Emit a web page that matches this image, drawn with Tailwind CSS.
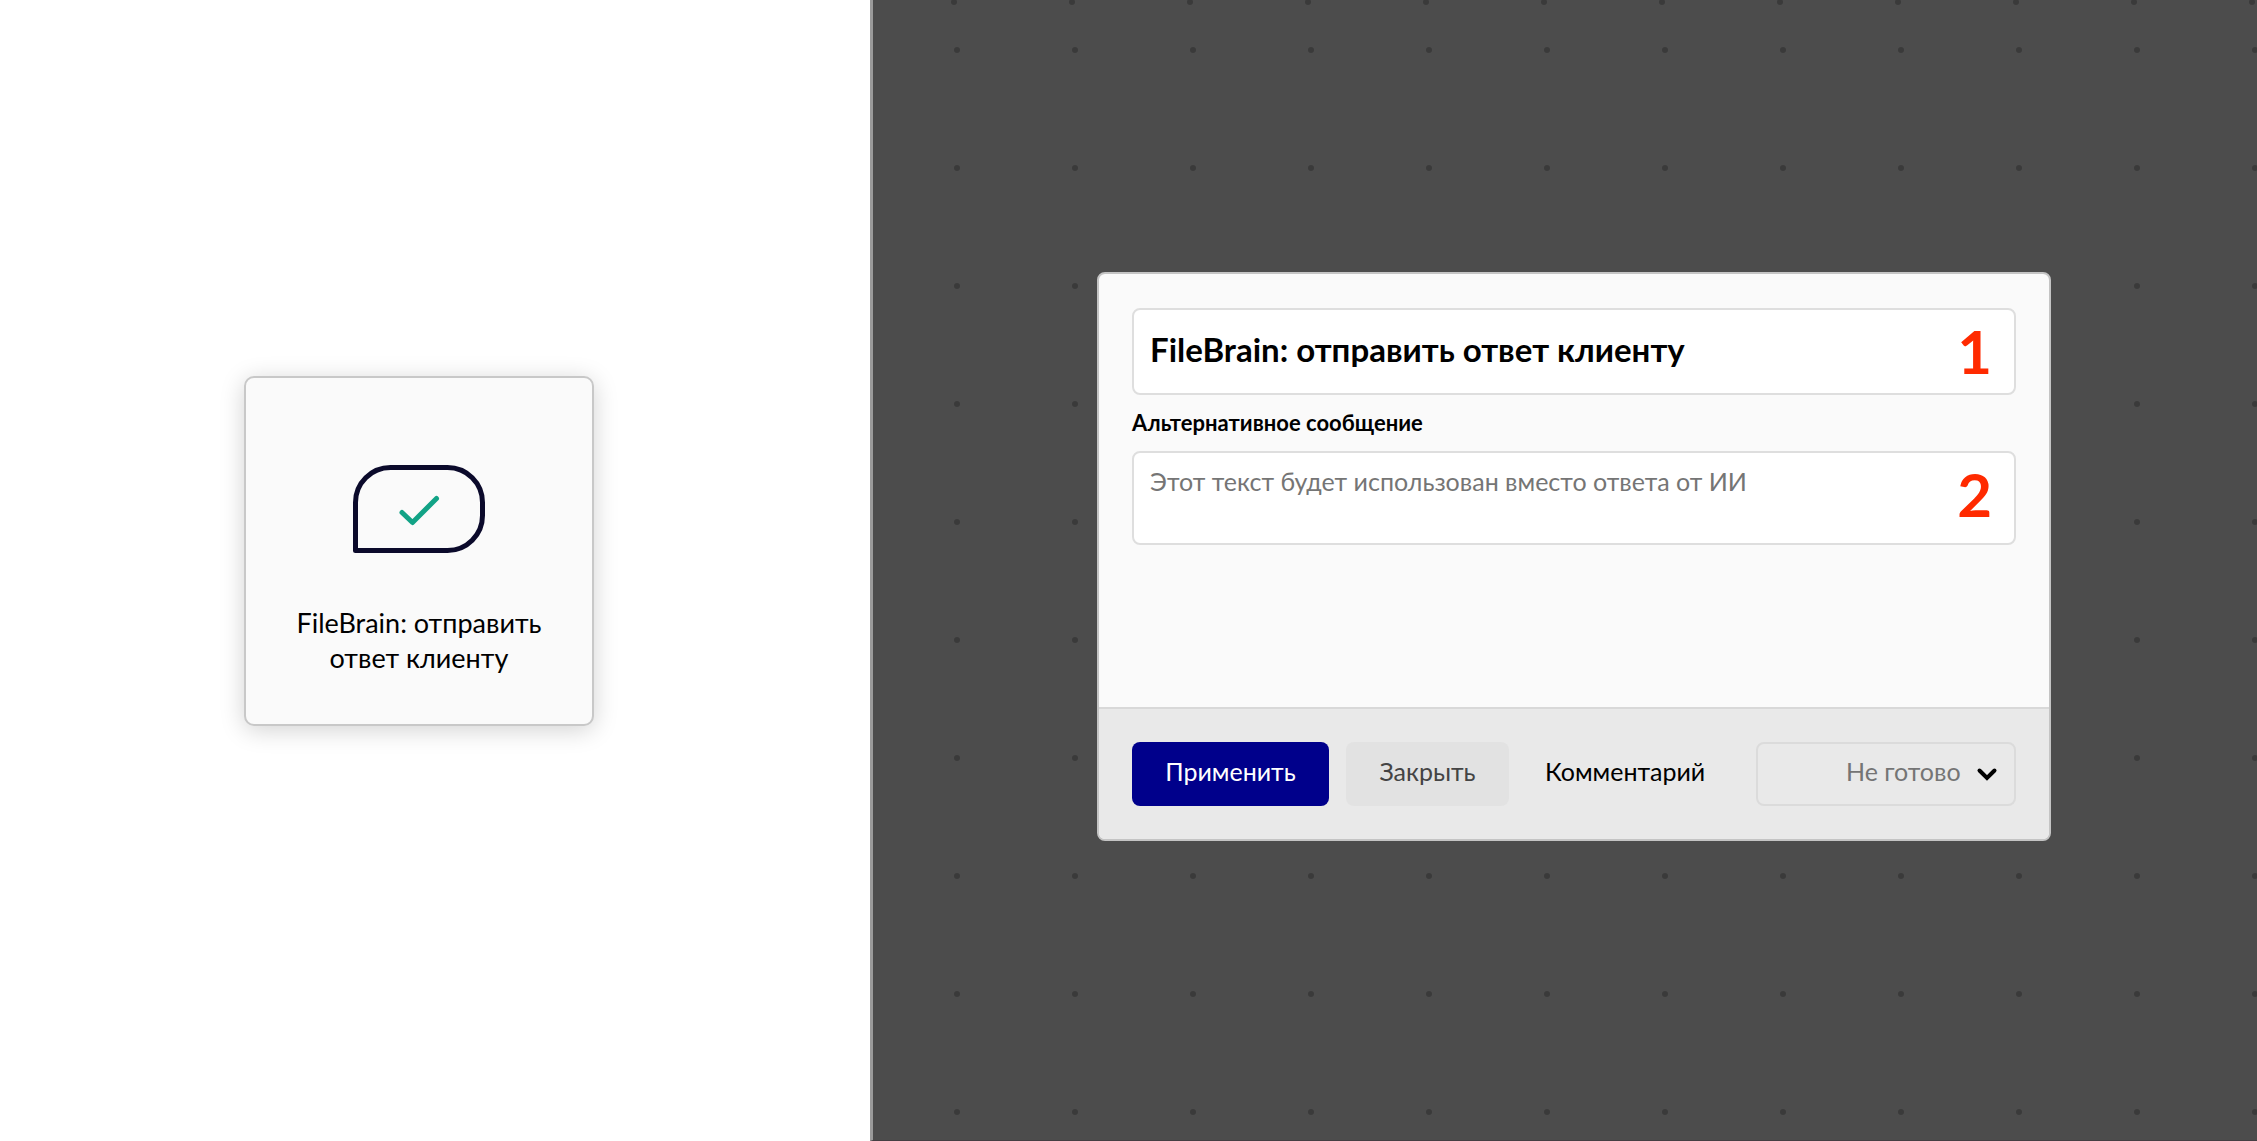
<!DOCTYPE html>
<html lang="ru">
<head>
  <meta charset="UTF-8" />
  <meta name="viewport" content="width=device-width, initial-scale=1.0"/>
  <title>FileBrain: отправить ответ клиенту</title>
  <script src="https://cdn.jsdelivr.net/npm/@tailwindcss/browser@4"></script>
</head>
<body class="min-h-screen flex bg-white text-black font-['Lato','Open_Sans',sans-serif]">

  <!-- Карточка блока -->
  <aside class="w-[870px] max-w-[40%] flex items-center justify-center pr-8 pb-10">
    <div class="w-[350px] h-[350px] flex flex-col items-center rounded-[10px] border-2 border-[#c8c8c8] bg-[#fafafa] pt-[87px] shadow-[0_4px_24px_rgba(0,0,0,0.18)]">
      <svg class="w-[132px] h-[88px]" viewBox="0 0 132 88" fill="none" stroke-linecap="round" stroke-linejoin="round">
        <path d="M2.5 85.5V37.5A35 35 0 0 1 37.500 2.500H94.500A35 35 0 0 1 129.500 37.500V50.500A35 35 0 0 1 94.500 85.500Z" stroke="#0b0a2b" stroke-width="5"/>
        <path d="M49 47.500L59.500 57.500L83.500 33.500" stroke="#12a386" stroke-width="5"/>
      </svg>
      <p class="mt-[52px] px-10 text-center text-[27px] leading-[35px]">FileBrain: отправить ответ клиенту</p>
    </div>
  </aside>

  <!-- Рабочее поле -->
  <main class="relative flex-1 flex items-center justify-center border-l-3 border-b border-l-[#9a9a9a] border-b-[#443f43] bg-[#4c4c4c] pl-[18px] pb-7">
    <svg class="absolute inset-0 w-full h-full" aria-hidden="true">
      <defs>
        <pattern id="dots" x="25" y="-9" width="118" height="118" patternUnits="userSpaceOnUse">
          <circle cx="59" cy="59" r="3" fill="#3a3a3a"/>
        </pattern>
        <pattern id="dotsTop" x="22" y="-57" width="118" height="118" patternUnits="userSpaceOnUse">
          <circle cx="59" cy="59" r="3" fill="#3a3a3a"/>
        </pattern>
      </defs>
      <rect width="100%" height="100%" fill="url(#dots)"/>
      <rect width="100%" height="8" fill="url(#dotsTop)"/>
    </svg>

    <form class="relative w-[954px] rounded-lg border-2 border-[#c4c4c4] bg-[#fafafa] overflow-hidden">
      <div class="px-[33px] pt-[34px] pb-[162px]">
        <div class="relative">
          <input type="text" aria-label="Название" value="FileBrain: отправить ответ клиенту"
            class="block w-full h-[87px] rounded-lg border-2 border-[#dedede] bg-white pl-4 pr-20 pb-1 text-[33px] font-bold outline-none" />
          <span class="absolute right-6 top-[13px] text-[60px] leading-none font-bold text-[#ff2a00]">1</span>
        </div>
        <label for="altMessage" class="flex items-center h-14 text-[22px] font-bold">Альтернативное сообщение</label>
        <div class="relative">
          <textarea id="altMessage" placeholder="Этот текст будет использован вместо ответа от ИИ"
            class="block w-full h-[94px] rounded-lg border-2 border-[#dedede] bg-white pl-4 pr-20 pt-3 text-[25px] leading-8 placeholder:text-[#757575] resize-none outline-none"></textarea>
          <span class="absolute right-6 top-[13px] text-[60px] leading-none font-bold text-[#ff2a00]">2</span>
        </div>
      </div>

      <div class="flex items-center border-t-2 border-[#d8d8d8] bg-[#e9e9e9] px-[33px] py-[33px]">
        <button type="submit" class="w-[197px] h-16 rounded-lg bg-[#00008b] pb-1 text-[25px] text-white">Применить</button>
        <button type="button" class="ml-[17px] w-[163px] h-16 rounded-lg bg-[#e2e2e2] pb-1 text-[25px] text-[#444444]">Закрыть</button>
        <button type="button" class="ml-9 h-16 pb-1 text-[25px]">Комментарий</button>
        <div class="relative ml-auto">
          <select aria-label="Статус" class="block w-[260px] h-16 appearance-none rounded-lg border-2 border-[#dbdbdb] bg-transparent pl-[88px] pb-1 text-[25px] text-[#757575] outline-none">
            <option>Не готово</option>
            <option>Готово</option>
          </select>
          <svg class="absolute right-4 top-6 w-6 h-4 pointer-events-none" viewBox="0 0 24 16" fill="none" stroke="#000000" stroke-width="4" stroke-linecap="round">
            <path d="M3.500 4.500L11 12L18.500 4.500"/>
          </svg>
        </div>
      </div>
    </form>
  </main>

</body>
</html>
